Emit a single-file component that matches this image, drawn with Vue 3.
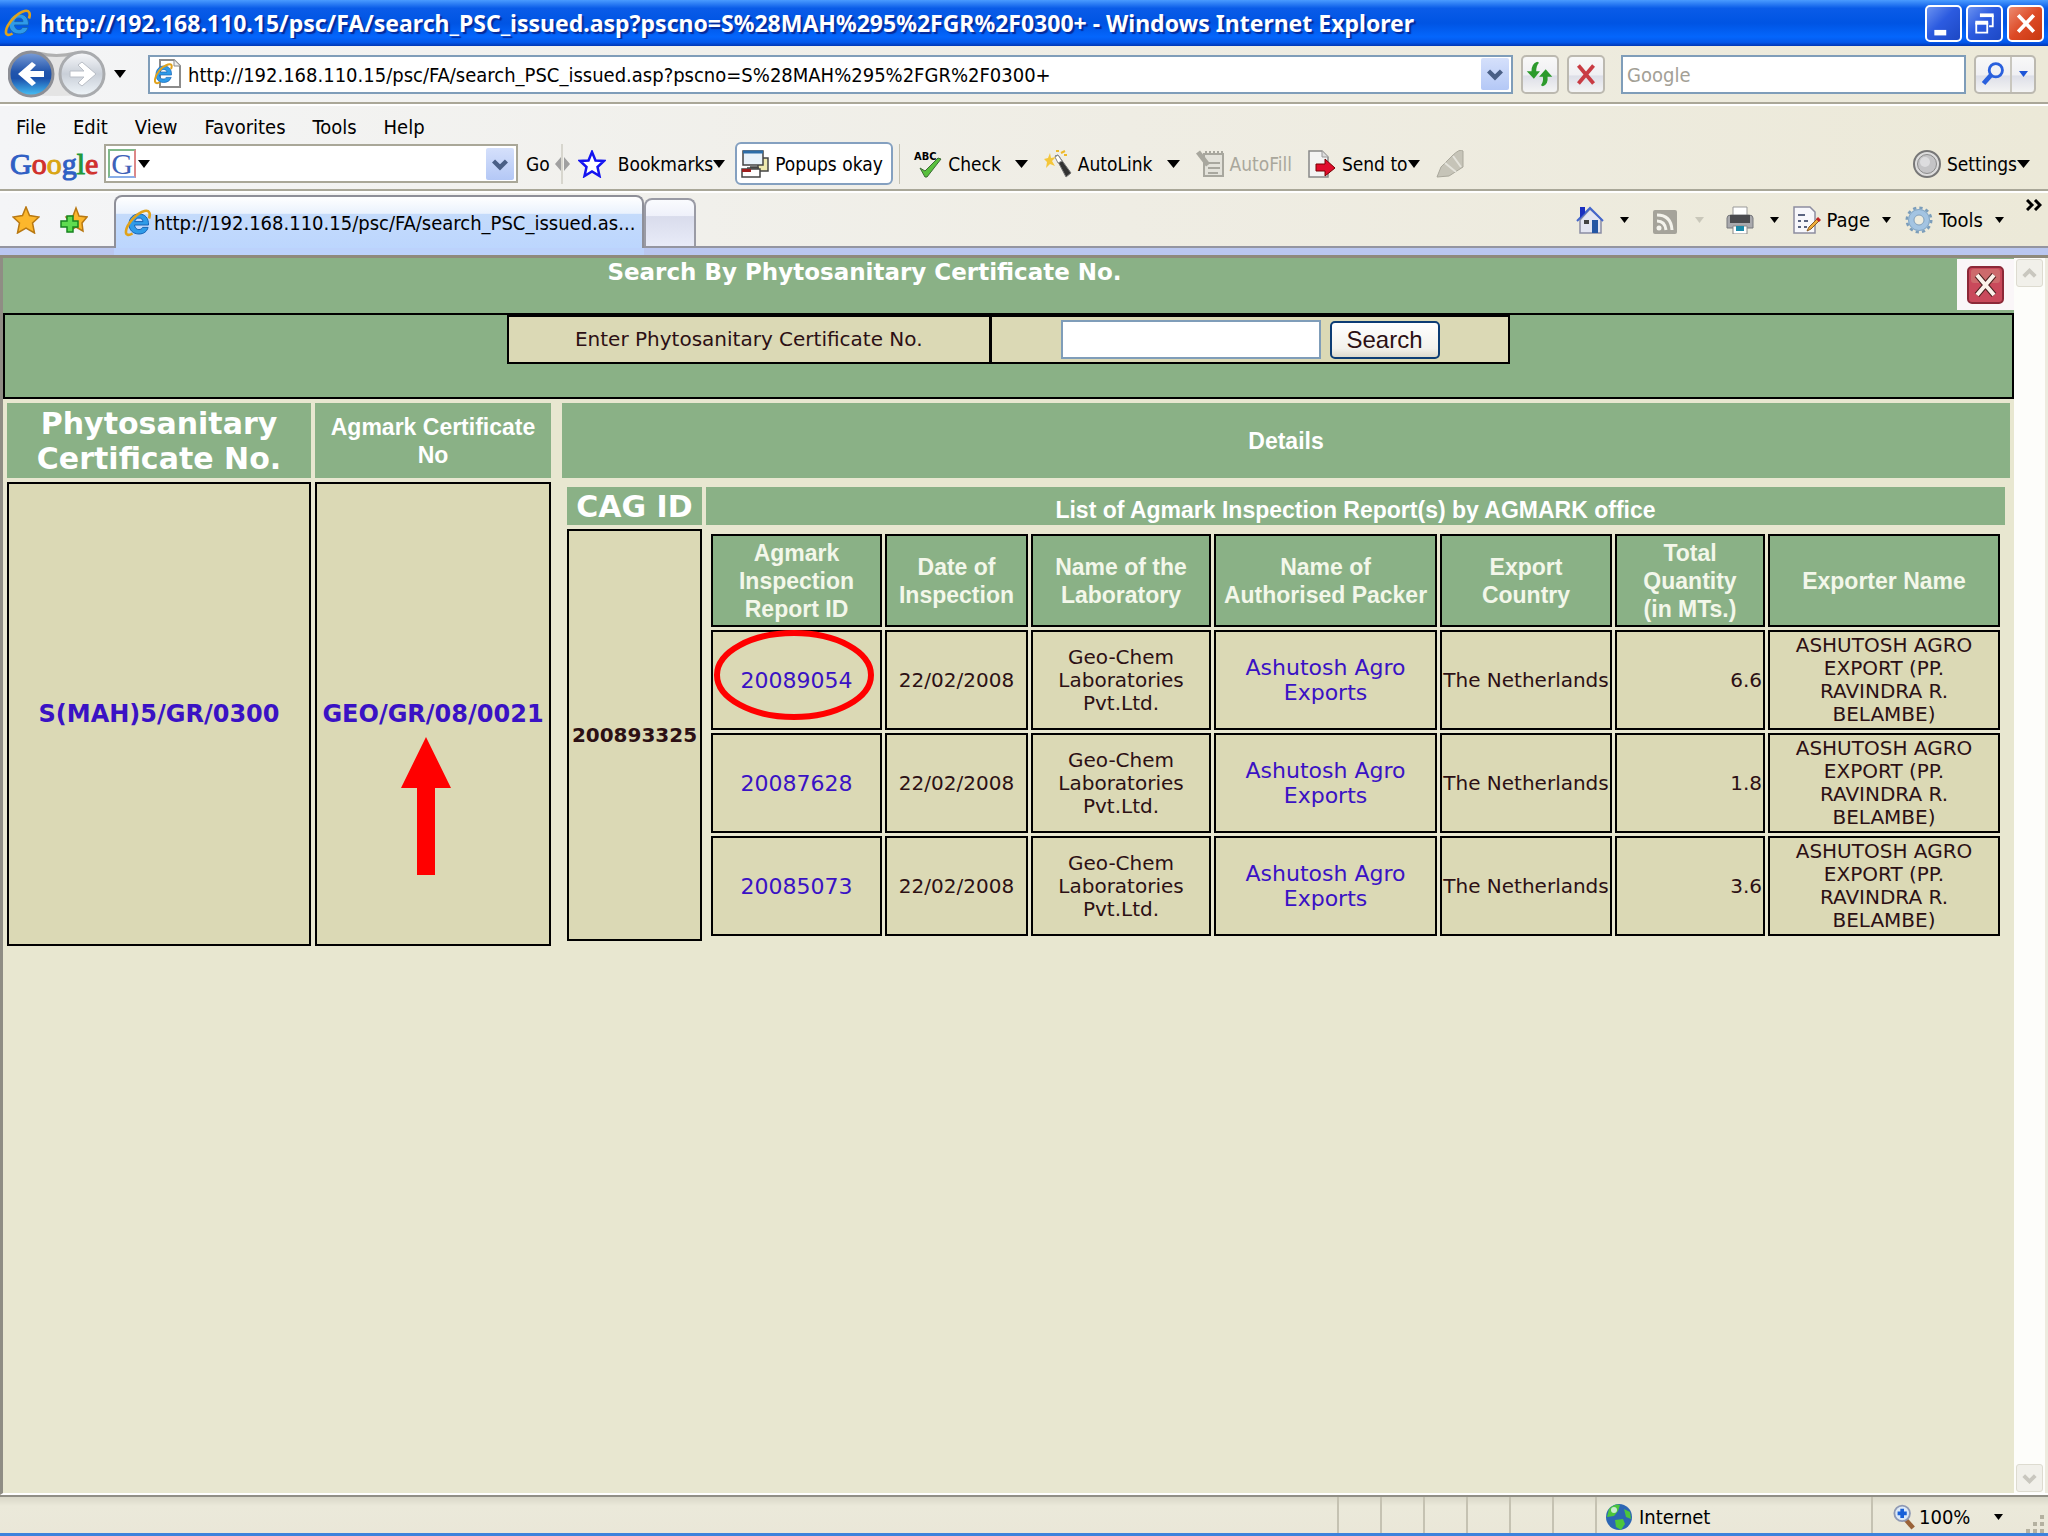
<script setup>
import { h } from 'vue'

const address = 'http://192.168.110.15/psc/FA/search_PSC_issued.asp?pscno=S%28MAH%295%2FGR%2F0300+'
const menus = ['File', 'Edit', 'View', 'Favorites', 'Tools', 'Help']
const logo = [
  ['G', '#2f5fc4'],
  ['o', '#d0302c'],
  ['o', '#d9a514'],
  ['g', '#2f5fc4'],
  ['l', '#1f9a3a'],
  ['e', '#d0302c'],
]
const columns = [
  'Agmark Inspection Report ID',
  'Date of Inspection',
  'Name of the Laboratory',
  'Name of Authorised Packer',
  'Export Country',
  'Total Quantity\n(in MTs.)',
  'Exporter Name',
]
const reports = [
  { id: '20089054', qty: '6.6', marked: true },
  { id: '20087628', qty: '1.8' },
  { id: '20085073', qty: '3.6' },
]

const Caret = (props) =>
  h('svg', { class: 'caret', width: props.w, height: props.w > 10 ? 8 : 6, viewBox: '0 0 12 7', preserveAspectRatio: 'none' }, [
    h('path', { d: 'M0 0h12L6 7z', fill: props.color || '#000' }),
  ])
Caret.props = ['w', 'color']

const Explorer = () =>
  h('svg', { viewBox: '0 0 28 28' }, [
    h('path', {
      d: 'M24.500 16H10.500c.4 3 2 4.600 4.400 4.600 1.800 0 3-.8 3.700-2.200h5.500C22.900 22.600 19.700 25 15 25 9 25 5 21 5 15.200 5 9.200 9 5 14.900 5c6.400 0 9.900 4.300 9.600 11zM19 12.600C18.800 10.400 17.300 9 15 9c-2.300 0-3.800 1.300-4.300 3.600z',
      fill: '#2f9be8',
      stroke: '#1763b4',
      'stroke-width': 1,
    }),
    h('path', {
      d: 'M25 9.500C26.800 4.500 25.500 1 20.500 2 13 3.600 3 15 2 22c-.6 4.500 2.600 4.800 6.500 2.500',
      fill: 'none',
      stroke: '#e0a21c',
      'stroke-width': 2.600,
    }),
  ])
</script>

<template>
  <div class="window">
    <header class="titlebar">
      <Explorer class="ie" />
      <span class="caption">{{ address }} - Windows Internet Explorer</span>
      <div class="controls">
        <button aria-label="Minimize">
          <svg viewBox="0 0 36 36"><rect x="8" y="25" width="13" height="6" fill="#fff" /></svg>
        </button>
        <button aria-label="Restore">
          <svg viewBox="0 0 36 36" fill="none" stroke="#fff" stroke-width="2">
            <path d="M14 10h13v11h-4" /><path d="M13 9h15" stroke-width="4" />
            <path d="M9 18h12v10H9z" /><path d="M8 17h14" stroke-width="4" />
          </svg>
        </button>
        <button class="exit" aria-label="Close">
          <svg viewBox="0 0 36 36"><path d="M10 9l17 18M27 9L10 27" stroke="#fff" stroke-width="4" /></svg>
        </button>
      </div>
    </header>

    <div class="address-row">
      <svg class="nav" viewBox="0 0 98 50">
        <defs>
          <linearGradient id="nb" x1="0" y1="0" x2="0" y2="1">
            <stop offset="0" stop-color="#7d9fd8" /><stop offset=".45" stop-color="#2255ac" />
            <stop offset=".6" stop-color="#1b51ac" /><stop offset="1" stop-color="#48c4f8" />
          </linearGradient>
          <linearGradient id="ng" x1="0" y1="0" x2="0" y2="1">
            <stop offset="0" stop-color="#f8f9fb" /><stop offset=".5" stop-color="#c9cfd8" />
            <stop offset="1" stop-color="#f0f6fa" />
          </linearGradient>
        </defs>
        <path d="M23 3Q48 8 74 3V46Q48 48 23 46z" fill="#e4e4e4" />
        <path d="M30 4Q48 9 68 4" fill="none" stroke="#b0b0b0" stroke-width="3" />
        <circle cx="23" cy="25" r="22" fill="url(#nb)" stroke="#8d8f96" stroke-width="3" />
        <circle cx="74" cy="25" r="22" fill="url(#ng)" stroke="#a9abae" stroke-width="3" />
        <path d="M10 25L24 13l4 3-6 6h14v6H22l6 6-4 3z" fill="#fff" />
        <path d="M88 25L74 13l-4 3 6 6H62v6h14l-6 6 4 3z" fill="#fff" stroke="#b9bec6" />
      </svg>
      <button class="plain" aria-label="Recent pages"><Caret :w="12" /></button>
      <div class="combo address">
        <svg class="page-ico" viewBox="0 0 28 30">
          <path d="M6 1h14l6 6v21H6z" fill="#fff" stroke="#8b8b8b" stroke-width="2" />
          <path d="M20 1v6h6" fill="#eee" stroke="#8b8b8b" />
          <path d="M17.500 16H5.500c.4 3 1.500 4 3.500 4s2.600-.6 3.200-1.600h5C16 22 13 23.500 9.500 23.500 4.500 23.500 2 20 2 15.500S5 7 9.800 7s8 3 7.700 9zM13 13c-.3-1.600-1.500-2.500-3.200-2.500S6.700 11.400 6 13z" fill="#2f9be8" stroke="#1763b4" stroke-width=".7" />
          <path d="M17 10c1.500-3.500.6-5.600-3-4.500C8 7.300 1 15.500.9 21.500c0 3 2.300 3.400 5 1.700" fill="none" stroke="#e0a21c" stroke-width="2" />
        </svg>
        <input type="text" aria-label="Address" :value="address" />
        <button class="drop" aria-label="Show addresses">
          <svg viewBox="0 0 26 30"><path d="M7 12l6 6 6-6" fill="none" stroke="#4a5f86" stroke-width="4" /></svg>
        </button>
      </div>
      <button class="tool" aria-label="Refresh">
        <svg viewBox="0 0 36 36" fill="#2c9a2c">
          <path d="M15 5q-6 2-6 10H4l7.500 8L18 15h-4q0-6 3-9z" /><path d="M21 31q6-2 5-10h5l-7-8-7 8h4q1 5-2 9z" />
        </svg>
      </button>
      <button class="tool" aria-label="Stop">
        <svg viewBox="0 0 36 36"><path d="M10 9l16 19M26 9L10 28" stroke="#c93b43" stroke-width="4" /></svg>
      </button>
      <input class="web-search" type="text" placeholder="Google" aria-label="Web search" />
      <div class="split">
        <button aria-label="Search the web">
          <svg viewBox="0 0 36 36" fill="none" stroke="#2a60dd"><circle cx="21" cy="14" r="7" stroke-width="3" /><path d="M16 19L8 28" stroke-width="5" /></svg>
        </button>
        <button aria-label="Search options"><Caret :w="9" color="#1d55d8" /></button>
      </div>
    </div>

    <nav class="menubar">
      <button v-for="m in menus" :key="m" class="plain">{{ m }}</button>
    </nav>

    <div class="google-bar">
      <span class="logo"><span v-for="(l, i) in logo" :key="i" :style="{ color: l[1] }">{{ l[0] }}</span></span>
      <div class="combo query">
        <span class="gbox">G</span>
        <Caret :w="12" />
        <input type="text" aria-label="Google search" />
        <button class="drop" aria-label="Search history">
          <svg viewBox="0 0 26 30"><path d="M7 12l6 6 6-6" fill="none" stroke="#4a5f86" stroke-width="4" /></svg>
        </button>
      </div>
      <button class="plain">Go</button>
      <svg class="grip" viewBox="0 0 16 40"><path d="M8 0v40" stroke="#bdbbae" /><path d="M7 13v14l-6-7zM10 13v14l6-7z" fill="#a0a0a0" /></svg>
      <button class="plain bookmarks">
        <svg class="i28" viewBox="0 0 28 28"><path d="M14 2l3.500 8.500L26 11l-6.500 6 2 9L14 21.500 6.500 26l2-9L2 11l8.500-.5z" fill="#fff" stroke="#1414f0" stroke-width="2.500" /></svg>
        <span class="cap">Bookmarks<Caret :w="12" /></span>
      </button>
      <button class="popups">
        <svg class="i28" viewBox="0 0 28 28" stroke="#444" stroke-width="1.500">
          <path d="M17 8h10v13H17z" fill="#eee9b0" /><path d="M1 19h18v8H1z" fill="#fff" /><path d="M1 19h9v3H1z" fill="#a02020" stroke="none" />
          <path d="M2 1h20v14H2z" fill="#e8f2fa" /><path d="M2 2h20" stroke="#2c6da8" stroke-width="3" /><path d="M9 17h8M6 18h12" />
        </svg>
        Popups okay
      </button>
      <i class="rule"></i>
      <div class="tools">
        <button class="plain wide">
          <svg class="i28 check" viewBox="0 0 28 28">
            <text x="0" y="10" class="abc">ABC</text>
            <path d="M6 18l5 3L24 8l3 1-14 18h-2z" fill="#58c03c" stroke="#3c6b34" />
          </svg>
          <span>Check</span><Caret :w="13" />
        </button>
        <button class="plain wide">
          <svg class="i28" viewBox="0 0 28 28">
            <path d="M11 6l3-1 13 18-5 4z" fill="#333" stroke="#777" /><path d="M11 7l3-2 4 6-4 2z" fill="#fff" stroke="#888" />
            <path d="M6 3l1 5 5-1-4 4 3 5-5-2-4 4 1-6-3-3 4-1z" fill="#f4c63a" /><path d="M12 1h3M17 3l4-2M20 5h3" stroke="#edb92a" stroke-width="2" />
          </svg>
          <span>AutoLink</span><Caret :w="13" />
        </button>
        <button class="plain off" disabled>
          <svg class="i28" viewBox="0 0 28 28" fill="none" stroke="#a8a79e" stroke-width="2">
            <path d="M8 4h19v22H8z" fill="#e3e2da" /><path d="M12 13h12M12 18h12M12 23h10" /><path d="M9 2h18" stroke-dasharray="2 2" /><path d="M2 2l10 13" stroke-width="5" />
          </svg>
          AutoFill
        </button>
        <button class="plain">
          <svg class="i28" viewBox="0 0 28 28">
            <path d="M1 1h13l6 6v20H1z" fill="#f3f3f3" stroke="#888" stroke-width="1.500" /><path d="M14 1v6h6" fill="#ddd" stroke="#999" />
            <path d="M8 14h9V9l10 9-10 8v-5H8z" fill="#e00c2c" stroke="#700" />
          </svg>
          <span class="cap">Send to<Caret :w="12" /></span>
        </button>
        <svg class="i28" viewBox="0 0 28 28"><path d="M16 6q8-8 11-5v16L13 26 1 27l4-10z" fill="#c6c4b8" stroke="#aaa89c" /><path d="M9 13l11 9M17 6l8 11" stroke="#e4e3db" stroke-width="2" /></svg>
      </div>
      <button class="plain settings">
        <svg class="i28" viewBox="0 0 28 28"><circle cx="14" cy="14" r="13" fill="#ddd" stroke="#777" stroke-width="2" /><circle cx="14" cy="14" r="9.500" fill="#c4c4c6" stroke="#8c8c8c" /><circle cx="12" cy="12" r="5" fill="#dcdcde" /></svg>
        <span class="cap">Settings<Caret :w="13" /></span>
      </button>
    </div>

    <div class="tab-row">
      <div class="favs">
        <svg class="i28" viewBox="0 0 28 28"><path d="M14 1l3.500 8.500L27 11l-6.500 6 2 10L14 22l-8.500 5 2-10L1 11l9.500-1.500z" fill="#fcb72c" stroke="#b87812" stroke-width="1.500" /></svg>
        <svg class="i28" viewBox="0 0 28 28"><path d="M16 2l3 8 8 1-5 6 1 8-7-4-7 4 1-8-4-6 7-1z" fill="#fcb72c" stroke="#b87812" stroke-width="1.500" /><path d="M7 10h6v5h5v6h-5v5H7v-5H1v-6h6z" fill="#5fdc50" stroke="#178420" stroke-width="1.500" /></svg>
      </div>
      <div class="tab">
        <Explorer class="ie" />
        <span>http://192.168.110.15/psc/FA/search_PSC_issued.as...</span>
      </div>
      <button class="newtab" aria-label="New tab"></button>
      <div class="commands">
        <button class="plain wide" aria-label="Home">
          <svg class="i28" viewBox="0 0 28 28"><path d="M4 14v13h21V13L14 3z" fill="#e4e6f2" stroke="#8a8da4" stroke-width="1.500" /><path d="M1 15L14 2l13 13" fill="none" stroke="#4466cc" stroke-width="2" /><path d="M4 1h5v6l-5 5z" fill="#1a2fc0" /><path d="M16 14h6v13h-6z" fill="#2456a4" /><path d="M8 14h5v4H8z" fill="#444" /></svg>
          <Caret :w="9" />
        </button>
        <button class="plain wide" aria-label="Feeds" disabled>
          <svg class="i28" viewBox="0 0 28 28"><rect x="2" y="4" width="24" height="24" rx="2" fill="#a5a39a" /><g fill="none" stroke="#f4f3ec" stroke-width="3"><path d="M6 9q14 0 15 15M6 15q8 0 9 9" /></g><circle cx="8" cy="22" r="2.500" fill="#f4f3ec" /></svg>
          <Caret :w="9" color="#c9c7ba" />
        </button>
        <button class="plain wide" aria-label="Print">
          <svg class="i28" viewBox="0 0 28 28"><path d="M7 1h14v10H7z" fill="#fff" stroke="#999" /><path d="M1 12q0-3 4-3h18q4 0 4 3v10H1z" fill="#a9a9ad" stroke="#77787c" /><path d="M4 9h20v8H4z" fill="#4a4a4e" /><path d="M7 20h14v8H7z" fill="#fff" stroke="#888" /><path d="M10 20h8v5h-8z" fill="#1c8aa8" /></svg>
          <Caret :w="9" />
        </button>
        <button class="plain page">
          <svg class="i28" viewBox="0 0 28 28"><path d="M1 1h16l5 5v21H1z" fill="#f7f7fb" stroke="#8d8da0" stroke-width="1.500" /><path d="M5 9h7M5 15h3M11 15h4M5 21h3M11 21h3" stroke="#5a6480" stroke-width="2" /><path d="M14 25l2-4 9-9 2 2-9 9z" fill="#f0ae3c" stroke="#8a5a20" /><path d="M24 12l3 3" stroke="#c02424" stroke-width="3" /></svg>
          Page <Caret :w="9" />
        </button>
        <button class="plain page">
          <svg class="i28" viewBox="0 0 28 28"><circle cx="14" cy="14" r="12" fill="none" stroke="#7b9dba" stroke-width="3" stroke-dasharray="3.200 3.083" /><circle cx="14" cy="14" r="8" fill="none" stroke="#a3c4e2" stroke-width="6" /><circle cx="14" cy="14" r="10.500" fill="none" stroke="#86a8c4" /><circle cx="14" cy="14" r="5" fill="#efedde" stroke="#7f9fbb" /></svg>
          Tools <Caret :w="9" />
        </button>
      </div>
      <svg class="more" viewBox="0 0 16 12"><path d="M1 1l5 5-5 5M9 1l5 5-5 5" fill="none" stroke="#000" stroke-width="3" /></svg>
    </div>
    <div class="band"></div>

    <div class="viewport">
      <main>
        <div class="banner">
          <h1>Search By Phytosanitary Certificate No.</h1>
          <button class="close" aria-label="Close page">
            <svg viewBox="0 0 38 38"><rect x="1" y="1" width="35" height="36" rx="4" fill="#c9495b" stroke="#8c2838" stroke-width="2" /><rect x="4" y="3" width="29" height="14" rx="3" fill="#d08078" opacity=".6" /><path d="M10 9l17 20M27 9L10 29" stroke="#4a2020" stroke-width="6" /><path d="M10 9l17 20M27 9L10 29" stroke="#fbf2ea" stroke-width="4" /></svg>
          </button>
        </div>
        <form class="search" @submit.prevent>
          <div class="search-box">
            <label for="cert">Enter Phytosanitary Certificate No.</label>
            <div class="entry">
              <input id="cert" type="text" />
              <button>Search</button>
            </div>
          </div>
        </form>

        <table class="results">
          <colgroup><col class="c-phyto" /><col class="c-agmark" /><col /></colgroup>
          <thead>
            <tr>
              <th class="big">Phytosanitary Certificate No.</th>
              <th>Agmark Certificate No</th>
              <th class="inset">Details</th>
            </tr>
          </thead>
          <tbody>
            <tr>
              <td class="box cert"><a href="#">S(MAH)5/GR/0300</a></td>
              <td class="box cert">
                <a href="#">GEO/GR/08/0021</a>
                <svg class="arrow" viewBox="0 0 50 138"><path d="M25 0l25 51H34v87H16V51H0z" fill="#f00" /></svg>
              </td>
              <td class="inset">
                <table class="details">
                  <colgroup><col class="c-cag" /><col /></colgroup>
                  <thead>
                    <tr><th class="big">CAG ID</th><th class="low">List of Agmark Inspection Report(s) by AGMARK office</th></tr>
                  </thead>
                  <tbody>
                    <tr>
                      <td class="box cag">200893325</td>
                      <td class="holder">
                        <table class="reports">
                          <colgroup>
                            <col class="c-id" /><col class="c-date" /><col class="c-lab" /><col />
                            <col class="c-country" /><col class="c-qty" /><col class="c-exporter" />
                          </colgroup>
                          <thead>
                            <tr><th v-for="c in columns" :key="c" class="box">{{ c }}</th></tr>
                          </thead>
                          <tbody>
                            <tr v-for="r in reports" :key="r.id">
                              <td class="box link">
                                <a href="#">{{ r.id }}</a>
                                <svg v-if="r.marked" class="ring" viewBox="0 0 162 92"><ellipse cx="81" cy="46" rx="77" ry="42" fill="none" stroke="#f00" stroke-width="6" /></svg>
                              </td>
                              <td class="box">22/02/2008</td>
                              <td class="box">Geo-Chem Laboratories Pvt.Ltd.</td>
                              <td class="box link"><a href="#">Ashutosh Agro Exports</a></td>
                              <td class="box country">The Netherlands</td>
                              <td class="box num">{{ r.qty }}</td>
                              <td class="box">ASHUTOSH AGRO EXPORT (PP. RAVINDRA R. BELAMBE)</td>
                            </tr>
                          </tbody>
                        </table>
                      </td>
                    </tr>
                  </tbody>
                </table>
              </td>
            </tr>
          </tbody>
        </table>
      </main>
      <div class="scrollbar">
        <button aria-label="Scroll up"><svg viewBox="0 0 26 26"><path d="M7 16l6-6 6 6" fill="none" stroke="#c9c7bf" stroke-width="4" /></svg></button>
        <button aria-label="Scroll down"><svg viewBox="0 0 26 26"><path d="M7 10l6 6 6-6" fill="none" stroke="#c9c7bf" stroke-width="4" /></svg></button>
      </div>
    </div>

    <footer class="status">
      <i v-for="n in 6" :key="n" class="pane"></i>
      <div class="zone">
        <svg class="i28" viewBox="0 0 28 28"><circle cx="14" cy="14" r="13" fill="#2c66b4" /><path d="M4 6q6-6 11-4l-2 6-4 5-7 1zM19 6l6 3 1 7-5-2zM10 17l8-1 2 5-4 6-5-3z" fill="#4cc63c" /><circle cx="9" cy="7" r="3" fill="#c8ecd0" /></svg>
        Internet
      </div>
      <div class="zoom">
        <svg viewBox="0 0 24 28"><path d="M14 17l8 9" stroke="#9a6238" stroke-width="5" /><circle cx="10" cy="10" r="8.500" fill="#dce9f7" stroke="#8f99b4" stroke-width="2" /><path d="M10 5v10M5 10h10" stroke="#1860d8" stroke-width="4" /></svg>
        <span>100%</span>
        <Caret :w="9" />
      </div>
      <svg class="sizer" viewBox="0 0 18 18" fill="#b4b1a0"><path d="M14 0h4v4h-4zM7 7h4v4H7zM14 7h4v4h-4zM0 14h4v4H0zM7 14h4v4H7zM14 14h4v4h-4z" /></svg>
    </footer>
  </div>
</template>

<style>
body {
  margin: 0;
}
</style>

<style scoped>
* {
  box-sizing: border-box;
}
.window {
  --green: #8ab186;
  --cell: #dbd9b5;
  --page: #e8e7d0;
  --ui: 'DejaVu Sans Condensed', 'Noto Sans', sans-serif;
  min-height: 100vh;
  display: flex;
  flex-direction: column;
  font: 20px/24px var(--ui);
  color: #000;
  background: linear-gradient(90deg, #f4f5f7, #efede4 55%, #ece9d8);
  border-bottom: 3px solid #3c82dc;
}
button {
  font: inherit;
  color: inherit;
  padding: 0;
  margin: 0;
}
svg {
  display: block;
  flex: none;
}
input {
  font: inherit;
  min-width: 0;
}
.plain {
  display: flex;
  align-items: center;
  gap: 6px;
  border: 0;
  background: none;
  white-space: nowrap;
}
.i28 {
  width: 28px;
  height: 28px;
}
.cap {
  display: flex;
  align-items: center;
}

.titlebar {
  height: 46px;
  display: flex;
  align-items: center;
  gap: 8px;
  padding: 0 4px;
  background: linear-gradient(#4a9bff, #0a5ce8 18%, #0054e3 50%, #0466fc 80%, #0458ea 92%, #0137b4);
}
.titlebar .ie {
  width: 28px;
  height: 30px;
}
.caption {
  flex: 1;
  white-space: nowrap;
  overflow: hidden;
  font: bold 23px/32px 'Noto Sans', sans-serif;
  color: #fff;
  text-shadow: 2px 2px 1px #062a9a;
}
.controls {
  display: flex;
  gap: 4px;
}
.controls button {
  width: 37px;
  height: 37px;
  border: 2px solid #fff;
  border-radius: 5px;
  background: linear-gradient(135deg, #6a92f0, #2c5be0 45%, #1d48c4);
}
.controls .exit {
  background: linear-gradient(135deg, #ec8b70, #dd4a26 50%, #c8380f);
}

.address-row {
  height: 58px;
  display: flex;
  align-items: center;
  padding: 0 12px 0 8px;
  border-bottom: 2px solid #aaa798;
}
.nav {
  width: 98px;
  height: 50px;
  margin-right: 8px;
}
.combo {
  display: flex;
  align-items: center;
  background: #fff;
  height: 39px;
  padding: 2px;
  gap: 6px;
}
.combo input {
  flex: 1;
  border: 0;
  padding: 2px 0 0;
  background: none;
}
.address {
  flex: 1;
  border: 2px solid #7f9db9;
  margin-left: 22px;
  margin-right: 8px;
}
.page-ico {
  width: 28px;
  height: 30px;
  margin-left: 2px;
}
.drop {
  width: 28px;
  height: 32px;
  border: 0;
  border-radius: 2px;
  background: linear-gradient(#d5e0fb, #b4c8f6);
}
.tool,
.split {
  height: 39px;
  border: 2px solid #bcb9b0;
  border-radius: 5px;
  background: linear-gradient(#f8f8f8, #f0f0f3 50%, #dddfe8 55%, #f4f4f4);
}
.tool {
  width: 38px;
  margin-right: 8px;
}
.tool svg {
  width: 34px;
  height: 34px;
}
.web-search {
  width: 345px;
  height: 39px;
  margin: 0 8px;
  padding: 2px 4px 0;
  border: 2px solid #7f9db9;
  background: #fff;
}
.web-search::placeholder {
  color: #a3a096;
  opacity: 1;
}
.split {
  display: flex;
  width: 62px;
}
.split button {
  display: flex;
  align-items: center;
  justify-content: center;
  border: 0;
  background: none;
  width: 22px;
}
.split button:first-child {
  width: 36px;
  border-right: 2px solid #c9c7bf;
}
.split button:first-child svg {
  width: 34px;
  height: 34px;
}

.menubar {
  height: 40px;
  display: flex;
  align-items: center;
  gap: 27px;
  padding: 4px 16px 0;
  border-top: 2px solid #fff;
}

.google-bar {
  height: 47px;
  display: flex;
  align-items: center;
  padding: 0 18px 6px 10px;
  border-bottom: 2px solid #a9a798;
  font-size: 19px;
}
.logo {
  width: 86px;
  font: 30px/36px 'Liberation Serif', serif;
  margin-right: 8px;
  -webkit-text-stroke: 1px;
}
.query {
  width: 414px;
  border: 2px solid #a9a798;
  margin-right: 8px;
}
.gbox {
  width: 28px;
  height: 29px;
  border: 2px solid #7fb98a;
  border-right-color: #d88;
  border-bottom-color: #8aaee8;
  font: 30px/26px 'Liberation Serif', serif;
  text-align: center;
  color: #3f62b8;
}
.query .caret {
  margin-left: -4px;
}
.grip {
  width: 16px;
  height: 40px;
  margin: 0 8px 0 4px;
}
.bookmarks {
  gap: 12px;
  margin-right: 10px;
}
.popups {
  display: flex;
  align-items: center;
  gap: 6px;
  height: 43px;
  width: 158px;
  padding: 0 4px;
  border: 2px solid #84a0c0;
  border-radius: 6px;
  background: #fff;
  white-space: nowrap;
}
.rule {
  width: 1px;
  height: 40px;
  margin: 0 14px 0 6px;
  background: #c4c1b2;
}
.tools {
  display: flex;
  align-items: center;
  gap: 16px;
}
.wide .caret {
  margin-left: 8px;
}
.check {
  overflow: visible;
}
.abc {
  font: bold 11px 'DejaVu Sans Condensed', sans-serif;
}
.off {
  color: #a9a79c;
}
.settings {
  margin-left: auto;
}

.tab-row {
  height: 57px;
  display: flex;
  align-items: flex-end;
  border-top: 2px solid #fff;
  border-bottom: 2px solid #9495a0;
}
.favs {
  display: flex;
  gap: 20px;
  align-self: center;
  width: 114px;
  padding: 0 12px;
}
.tab {
  width: 530px;
  height: 53px;
  margin-bottom: -2px;
  display: flex;
  align-items: center;
  gap: 2px;
  padding: 0 8px;
  border: 2px solid #8e8f98;
  border-bottom: 0;
  border-radius: 8px 8px 0 0;
  background: linear-gradient(#fff, #eaf2fd 32%, #c4dbfb 34%, #bcd6fe);
  white-space: nowrap;
}
.tab .ie {
  width: 28px;
  height: 30px;
}
.newtab {
  width: 52px;
  height: 48px;
  border: 2px solid #9a9ba5;
  border-bottom: 0;
  border-radius: 8px 8px 0 0;
  background: linear-gradient(#fafbfe, #eff1fa 34%, #d9dcec 36%, #e8ebf8);
}
.commands {
  display: flex;
  align-items: center;
  align-self: center;
  gap: 22px;
  margin-left: auto;
}
.commands .caret {
  margin-left: 10px;
}
.commands .page {
  margin-left: -8px;
}
.page .caret {
  margin-left: 6px;
}
.more {
  width: 16px;
  height: 12px;
  margin: 6px 6px 0 22px;
  align-self: flex-start;
}
.band {
  height: 10px;
  background: linear-gradient(90deg, transparent 114px, #bcd2fc 114px 644px, transparent 644px), #bac7f0;
  border-bottom: 3px solid #8f8a7c;
}

.viewport {
  flex: 1;
  display: flex;
  border-left: 3px solid #8f8d84;
  border-bottom: 2px solid #fff;
  background: var(--page);
}
main {
  flex: 1;
  min-width: 0;
  font: 20px/23px 'DejaVu Sans', Verdana, sans-serif;
  color: #2c1014;
}
.banner {
  position: relative;
  height: 55px;
  background: var(--green);
}
h1 {
  margin: 0;
  padding: 0 288px 0 0;
  font: bold 23px/28px 'DejaVu Sans', Verdana, sans-serif;
  color: #fff;
  text-align: center;
}
.close {
  position: absolute;
  right: 0;
  top: 1px;
  width: 57px;
  height: 51px;
  display: grid;
  place-items: center;
  border: 0;
  background: #faf6f8;
}
.close svg {
  width: 38px;
  height: 38px;
}
.search {
  height: 86px;
  border: 2px solid #000;
  background: var(--green);
}
.search-box {
  width: 50%;
  height: 49px;
  margin: 0 auto;
  display: grid;
  grid-template-columns: 483px 1fr;
  border: 2px solid #000;
  background: var(--cell);
}
.search-box label {
  display: grid;
  place-items: center;
  border-right: 3px solid #000;
}
.entry {
  display: flex;
  align-items: center;
  justify-content: center;
  gap: 9px;
}
.entry input {
  width: 260px;
  height: 39px;
  border: 2px solid #7f9db9;
  background: #fff;
}
.entry button {
  width: 110px;
  height: 38px;
  font: 24px/30px 'Liberation Sans', Arial, sans-serif;
  border: 2px solid #0c3c74;
  border-radius: 5px;
  background: linear-gradient(#fff, #f2f1ec 75%, #dcd9cc);
}

table {
  width: 100%;
  table-layout: fixed;
  border-spacing: 4px;
}
th,
td {
  padding: 1px;
  text-align: center;
  vertical-align: middle;
}
th {
  background: var(--green);
  color: #fff;
  font: bold 23px/28px 'Liberation Sans', Arial, sans-serif;
  white-space: pre-line;
}
th.big {
  font: bold 30px/35px 'DejaVu Sans', Verdana, sans-serif;
  height: 38px;
}
th.low {
  vertical-align: bottom;
}
.results > thead > tr > th {
  height: 75px;
}
.box {
  border: 2px solid #000;
}
td.box {
  background: var(--cell);
}
.inset {
  border-left: 7px solid transparent;
  background-clip: padding-box;
}
.c-phyto {
  width: 304px;
}
.c-agmark {
  width: 236px;
}
.c-cag {
  width: 135px;
}
.c-id {
  width: 171px;
}
.c-date {
  width: 143px;
}
.c-lab {
  width: 180px;
}
.c-country {
  width: 172px;
}
.c-qty {
  width: 150px;
}
.c-exporter {
  width: 232px;
}
td.holder {
  padding: 2px;
}
.reports {
  border-spacing: 3px;
}
.reports th {
  height: 93px;
  color: #f3f7ea;
}
.reports td {
  height: 100px;
  position: relative;
}
.cert {
  position: relative;
  font-size: 24px;
  font-weight: bold;
}
.cag {
  font-weight: bold;
}
a {
  color: #3a12c4;
  text-decoration: none;
}
.link {
  font-size: 22px;
  line-height: 25px;
}
.country {
  white-space: nowrap;
}
td.num {
  text-align: right;
}
.arrow {
  position: absolute;
  left: 84px;
  top: 55%;
  width: 50px;
  height: 138px;
}
.ring {
  position: absolute;
  left: 0;
  top: -3px;
  width: 162px;
  height: 92px;
}

.scrollbar {
  width: 34px;
  display: flex;
  flex-direction: column;
  justify-content: space-between;
  align-items: center;
  padding: 1px 0;
  background: #fdfdfa;
  border-right: 3px solid #edebdf;
}
.scrollbar button {
  width: 27px;
  height: 28px;
  border: 1px solid #dddbd0;
  border-radius: 3px;
  background: #f1f0ea;
}

.status {
  height: 38px;
  display: flex;
  align-items: stretch;
  justify-content: flex-end;
  border-top: 2px solid #918f86;
  background: linear-gradient(#d9d7c8, #ebe9da 25%, #eae7d8);
}
.pane {
  width: 43px;
  border-left: 2px solid #c5c2b2;
}
.zone {
  display: flex;
  align-items: center;
  gap: 6px;
  width: 276px;
  padding: 4px 0 0 8px;
  border-left: 2px solid #c5c2b2;
}
.zoom {
  display: flex;
  align-items: center;
  gap: 4px;
  width: 155px;
  padding: 4px 0 0 20px;
  border-left: 2px solid #c5c2b2;
}
.zoom svg:first-child {
  width: 22px;
  height: 28px;
}
.zoom .caret {
  margin-left: 20px;
}
.sizer {
  width: 18px;
  height: 18px;
  align-self: flex-end;
  margin-right: 4px;
}
</style>
